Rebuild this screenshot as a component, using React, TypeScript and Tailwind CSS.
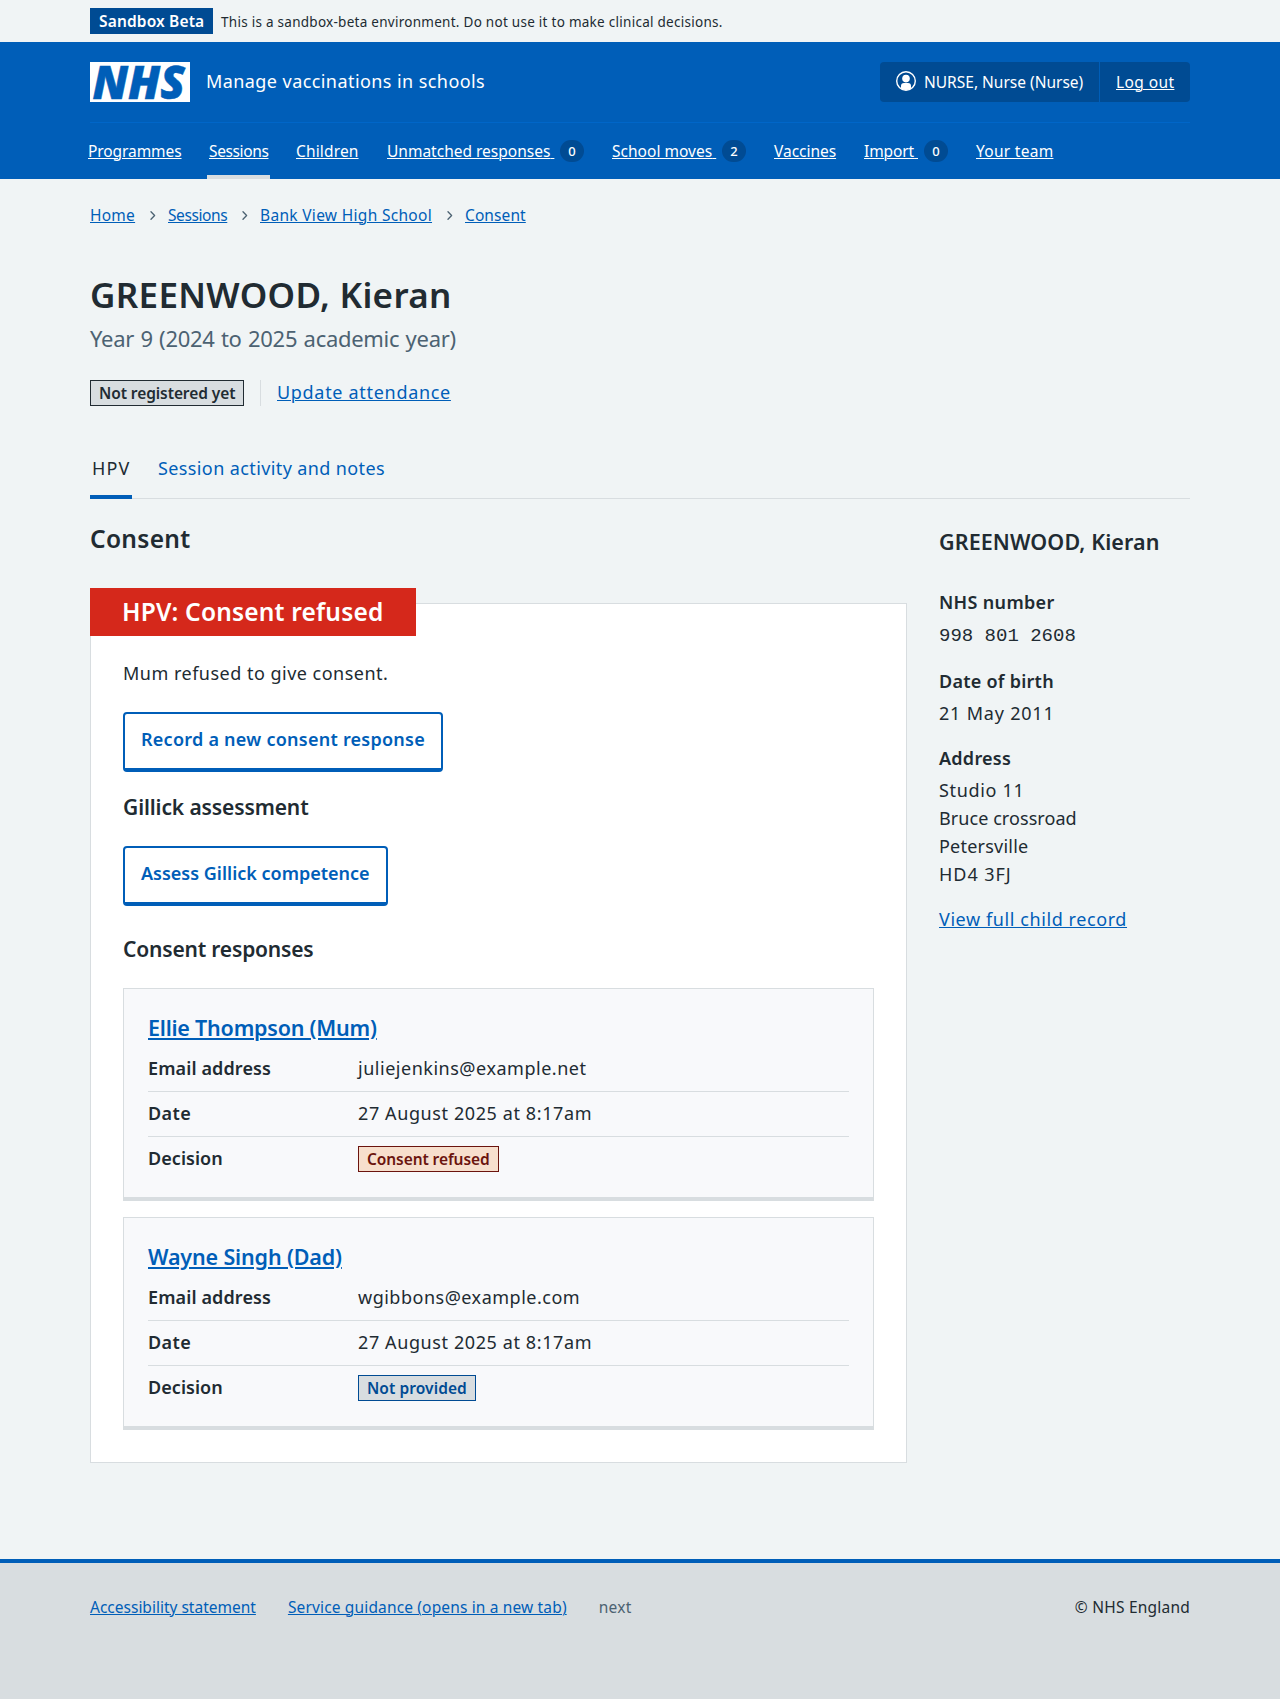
import type { ReactNode } from 'react';

const link = 'text-[#005eb8] underline decoration-1 underline-offset-[1px]';

function Badge({ children }: { children: ReactNode }) {
  return (
    <span className="ml-auto flex h-[22px] w-6 items-center justify-center rounded-full bg-[#004b93] text-[13px] leading-[22px] font-medium text-white">
      {children}
    </span>
  );
}

function NavItem({ width, track, label, badge, active }: { width: string; track: string; label: string; badge?: string; active?: boolean }) {
  return (
    <li className={`relative flex h-14 items-center ${width}`}>
      <a className={`whitespace-pre text-white underline decoration-1 underline-offset-[1px] ${track}`}>
        {label}
        {badge ? ' ' : ''}
      </a>
      {badge && <Badge>{badge}</Badge>}
      {active && <span className="absolute -right-0.5 bottom-0 -left-0.5 h-1 bg-[#d8dde0]" />}
    </li>
  );
}

function Chevron() {
  return (
    <svg className="h-[9px] w-[6px] shrink-0" viewBox="0 0 6 9" fill="none" stroke="#4c6272" strokeWidth="1.3" strokeLinecap="round" strokeLinejoin="round">
      <path d="M1 0.8 4.6 4.5 1 8.2" />
    </svg>
  );
}

function Row({ label, labelTrack, children, first, last }: { label: string; labelTrack: string; children: ReactNode; first?: boolean; last?: boolean }) {
  return (
    <div className={`flex leading-7 ${first ? '' : 'pt-[7px]'} ${last ? '' : 'border-b border-[#d8dde0] pb-[9px]'}`}>
      <dt className={`w-[210px] font-semibold ${labelTrack}`}>{label}</dt>
      <dd>{children}</dd>
    </div>
  );
}

function Response({ name, nameTrack, email, emailTrack, tag }: { name: string; nameTrack: string; email: string; emailTrack: string; tag: ReactNode }) {
  return (
    <section className="h-[213px] border border-b-4 border-[#d8dde0] bg-[#f8f9fb] px-6 pt-[22px]">
      <h4 className="text-[21.5px] leading-[33px] font-semibold">
        <a className={`text-[#005eb8] underline decoration-2 underline-offset-[2px] ${nameTrack}`}>{name}</a>
      </h4>
      <dl className="mt-2.5">
        <Row first label="Email address" labelTrack="tracking-[0.12px]">
          <span className={emailTrack}>{email}</span>
        </Row>
        <Row label="Date" labelTrack="tracking-[0.4px]">
          <span className="tracking-[0.6px]">27 August 2025 at 8:17am</span>
        </Row>
        <Row last label="Decision" labelTrack="tracking-[0.05px]">
          {tag}
        </Row>
      </dl>
    </section>
  );
}

export default function App() {
  return (
    <div className="flex min-h-[1699px] flex-col bg-[#f0f4f5] font-['Noto_Sans',sans-serif] text-[18px] leading-7 text-[#212b32]">
      <div className="flex h-[42px] items-start px-[90px] pt-2">
        <strong className="h-[26px] w-[123px] bg-[#004b93] pl-[9px] text-[15.5px] leading-[26px] font-semibold tracking-[0.15px] whitespace-nowrap text-white">
          Sandbox Beta
        </strong>
        <span className="mt-px ml-2 text-[13.5px] leading-[26px] tracking-[0.27px] whitespace-nowrap">
          This is a sandbox-beta environment. Do not use it to make clinical decisions.
        </span>
      </div>

      <header className="h-[137px] bg-[#005eb8] px-[90px] text-white">
        <div className="flex h-20 items-center">
          <svg className="h-10 w-[100px] overflow-visible bg-white" viewBox="0 0 100 40">
            <text x="2.5" y="36.500" textLength="92.500" lengthAdjust="spacingAndGlyphs" fill="#005eb8" stroke="#005eb8" strokeWidth="0.5" className="font-['Open_Sans'] text-[45.5px] font-extrabold italic">
              NHS
            </text>
          </svg>
          <span className="mb-0.5 ml-4 tracking-[0.43px]">Manage vaccinations in schools</span>
          <div className="ml-auto flex h-10 w-[310px] items-center overflow-hidden rounded bg-[#004b93] text-[15.5px] leading-6">
            <div className="flex h-10 w-[220px] items-center border-r border-[#005eb8] pl-4 whitespace-nowrap">
              <svg className="mr-2 -mt-0.5 h-5 w-5" viewBox="0 0 20 20">
                <circle cx="10" cy="10" r="9.3" fill="none" stroke="#fff" strokeWidth="1.4" />
                <circle cx="10" cy="7.6" r="3.8" fill="#fff" />
                <path d="M5 17.500v-2.600a3 3 0 0 1 3-3h4a3 3 0 0 1 3 3v2.600a9.300 9.300 0 0 1-10 0Z" fill="#fff" />
              </svg>
              <span>NURSE, Nurse (Nurse)</span>
            </div>
            <a className="ml-4 tracking-[0.4px] whitespace-nowrap underline decoration-1 underline-offset-[1px]">Log out</a>
          </div>
        </div>
        <nav className="border-t border-[#0066c8]">
          <ul className="-ml-0.5 flex gap-7 text-[15.5px] leading-6 whitespace-nowrap">
            <NavItem width="w-[93px]" track="tracking-[-0.08px]" label="Programmes" />
            <NavItem width="w-[59px]" track="tracking-[-0.38px]" label="Sessions" active />
            <NavItem width="w-[63px]" track="tracking-[0.15px]" label="Children" />
            <NavItem width="w-[197px]" track="tracking-[0px]" label="Unmatched responses" badge="0" />
            <NavItem width="w-[134px]" track="tracking-[0.02px]" label="School moves" badge="2" />
            <NavItem width="w-[62px]" track="tracking-[-0.03px]" label="Vaccines" />
            <NavItem width="w-[84px]" track="tracking-[-0.1px]" label="Import" badge="0" />
            <NavItem width="w-[77px]" track="tracking-[0.28px]" label="Your team" />
          </ul>
        </nav>
      </header>

      <main className="px-[90px]">
        <nav className="mt-6 flex items-center text-[15.5px] leading-6 whitespace-nowrap">
          <a className={`w-[60px] tracking-[0.25px] ${link}`}>Home</a>
          <Chevron />
          <a className={`ml-3 w-[74px] tracking-[-0.4px] ${link}`}>Sessions</a>
          <Chevron />
          <a className={`ml-3 w-[187px] tracking-[0.31px] ${link}`}>Bank View High School</a>
          <Chevron />
          <a className={`ml-3 tracking-[0.1px] ${link}`}>Consent</a>
        </nav>

        <h1 className="mt-11 text-[35px] leading-[48px] font-semibold tracking-[0.32px]">GREENWOOD, Kieran</h1>
        <p className="mt-[3px] text-[22px] leading-[33px] tracking-[-0.3px] text-[#4c6272] [word-spacing:1px]">Year 9 (2024 to 2025 academic year)</p>

        <div className="mt-[25px] flex h-[26px] items-start leading-6">
          <strong className="h-[26px] w-[154px] border border-[#212b32] bg-[#d8dde0] pl-2 text-[15.5px] font-semibold tracking-[-0.08px] whitespace-nowrap">
            Not registered yet
          </strong>
          <div className="ml-4 h-[26px] border-l border-[#d8dde0] pl-4">
            <a className={`tracking-[0.69px] ${link}`}>Update attendance</a>
          </div>
        </div>

        <div className="mt-12 flex h-[45px] items-start border-b border-[#d8dde0]">
          <a className="h-[45px] w-[42px] shrink-0 border-b-4 border-[#005eb8] pl-0.5 tracking-[1.1px]">HPV</a>
          <a className="ml-[26px] tracking-[0.39px] text-[#005eb8]">Session activity and notes</a>
        </div>

        <div className="flex items-start justify-between">
          <div className="w-[817px] pt-[22px]">
            <h2 className="text-[24.5px] leading-[35px] font-semibold tracking-[0.3px]">Consent</h2>

            <div className="mt-[47px] flex h-[860px] flex-col items-start border border-[#d8dde0] bg-white px-8">
              <h3 className="-mt-4 -ml-[33px] h-12 w-[326px] shrink-0 bg-[#d5281b] pl-8 text-[24.5px] leading-[48px] font-semibold tracking-[0.18px] whitespace-nowrap text-white">
                HPV: Consent refused
              </h3>
              <p className="mt-[23px] tracking-[0.49px]">Mum refused to give consent.</p>
              <a className="mt-[25px] h-[60px] w-80 shrink-0 rounded border-2 border-b-4 border-[#005eb8] pt-[11px] pl-4 font-semibold tracking-[0.25px] whitespace-nowrap text-[#005eb8]">
                Record a new consent response
              </a>
              <h4 className="mt-[19px] text-[21px] leading-[33px] font-semibold tracking-[-0.12px]">Gillick assessment</h4>
              <a className="mt-[22px] h-[60px] w-[265px] shrink-0 rounded border-2 border-b-4 border-[#005eb8] pt-[11px] pl-4 font-semibold whitespace-nowrap text-[#005eb8]">
                Assess Gillick competence
              </a>
              <h4 className="mt-[27px] text-[21px] leading-[33px] font-semibold tracking-[-0.18px]">Consent responses</h4>
              <div className="mt-[22px] flex w-full flex-col gap-4">
                <Response
                  name="Ellie Thompson (Mum)"
                  nameTrack="tracking-[-0.22px]"
                  email="juliejenkins@example.net"
                  emailTrack="tracking-[0.52px]"
                  tag={
                    <strong className="mt-0.5 block h-[26px] w-[141px] border border-[#6b140e] bg-[#f7dfcd] pl-2 text-[15.5px] leading-6 font-semibold tracking-[-0.08px] whitespace-nowrap text-[#6b140e]">
                      Consent refused
                    </strong>
                  }
                />
                <Response
                  name="Wayne Singh (Dad)"
                  nameTrack="tracking-[-0.15px]"
                  email="wgibbons@example.com"
                  emailTrack="tracking-[0.5px]"
                  tag={
                    <strong className="mt-0.5 block h-[26px] w-[118px] border border-[#004b93] bg-[#d8dde0] pl-2 text-[15.5px] leading-6 font-semibold tracking-[0.08px] whitespace-nowrap text-[#004b93]">
                      Not provided
                    </strong>
                  }
                />
              </div>
            </div>
          </div>

          <aside className="w-[251px] pt-[26px]">
            <h3 className="text-[21.5px] leading-[33px] font-semibold tracking-[0.1px] whitespace-nowrap">GREENWOOD, Kieran</h3>
            <dl className="mt-[30px]">
              <dt className="font-semibold tracking-[0.33px]">NHS number</dt>
              <dd className="mt-1.5 font-['Liberation_Mono',monospace] text-[19px]">998 801 2608</dd>
              <dt className="mt-[17px] font-semibold tracking-[0.25px]">Date of birth</dt>
              <dd className="mt-1 tracking-[0.8px]">21 May 2011</dd>
              <dt className="mt-[17px] font-semibold tracking-[0.25px]">Address</dt>
              <dd className="mt-1">
                <span className="block tracking-[0.68px]">Studio 11</span>
                <span className="block tracking-[0.07px]">Bruce crossroad</span>
                <span className="block tracking-[0.22px]">Petersville</span>
                <span className="block tracking-[0.95px]">HD4 3FJ</span>
              </dd>
            </dl>
            <p className="mt-[17px]">
              <a className={`tracking-[0.59px] ${link}`}>View full child record</a>
            </p>
          </aside>
        </div>
      </main>

      <footer className="mt-24 flex grow items-start border-t-4 border-[#005eb8] bg-[#d8dde0] px-[90px] pt-8 text-[15.5px] leading-6 whitespace-nowrap">
        <a className={link}>Accessibility statement</a>
        <a className={`ml-8 tracking-[0.15px] ${link}`}>Service guidance (opens in a new tab)</a>
        <span className="ml-8 tracking-[0.3px] text-[#4c6272]">next</span>
        <span className="ml-auto tracking-[0.22px]">© NHS England</span>
      </footer>
    </div>
  );
}
